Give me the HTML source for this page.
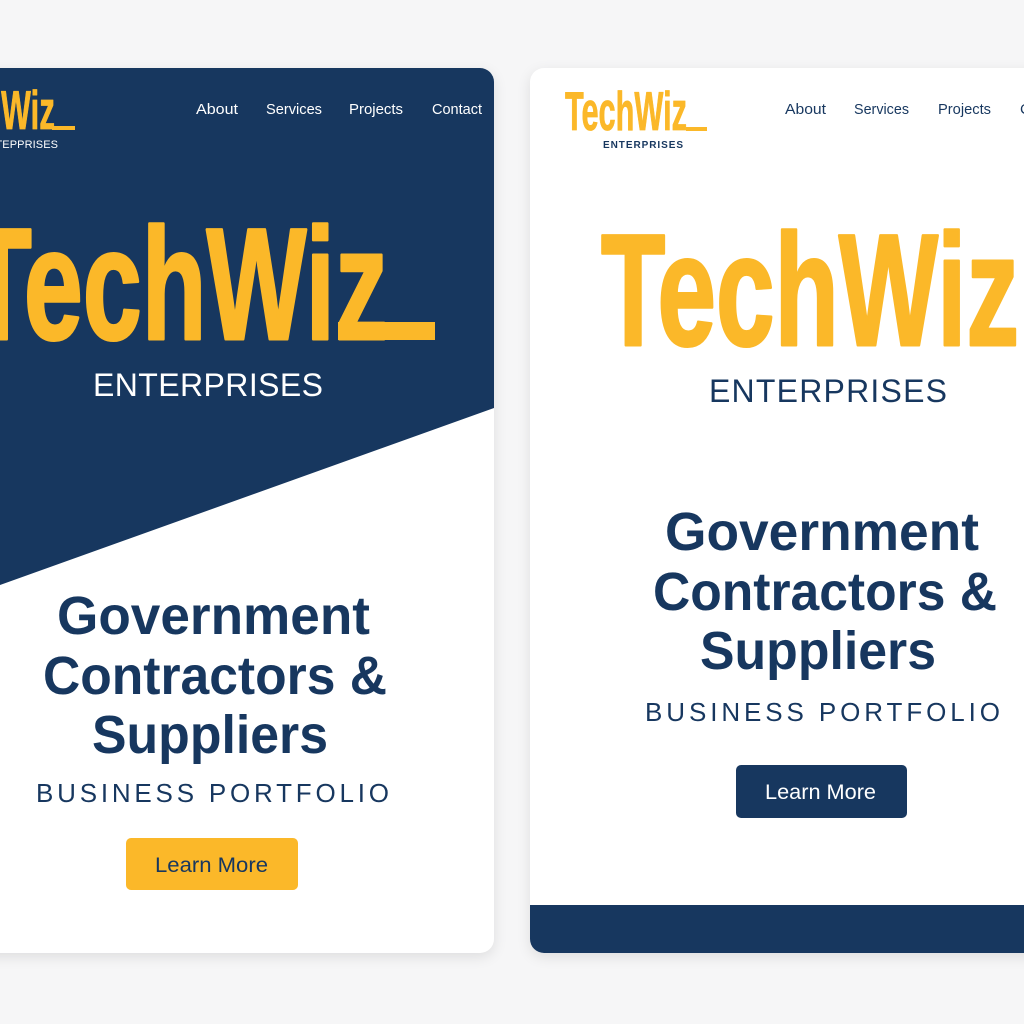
<!DOCTYPE html>
<html><head><meta charset="utf-8"><style>
html,body{margin:0;padding:0;width:1024px;height:1024px;background:#f6f6f7;overflow:hidden}
.card{position:absolute;top:68px;height:885px;border-radius:14px;background:#fff;box-shadow:0 4px 14px rgba(0,0,0,.10)}
svg{position:absolute;left:0;top:0}
</style></head><body>
<div class="card" style="left:-30px;width:524px"></div>
<div class="card" style="left:530px;width:520px"></div>
<svg width="1024" height="1024" viewBox="0 0 1024 1024">
<defs>
<clipPath id="lc"><rect x="-30" y="68" width="524" height="885" rx="14"/></clipPath>
<clipPath id="rc"><rect x="530" y="68" width="520" height="885" rx="14"/></clipPath>
</defs>
<g clip-path="url(#lc)">
<polygon points="-30,68 494,68 494,408 0,585 -30,596" fill="#17375f"/>
</g>
<g clip-path="url(#rc)">
<rect x="530" y="905" width="520" height="60" fill="#17375f"/>
</g>
<g font-family="Liberation Sans, sans-serif" font-weight="bold" fill="#fbb829" stroke="#fbb829" stroke-linejoin="round">
<text x="-70" y="129" font-size="55" stroke-width="0.8" textLength="125" lengthAdjust="spacingAndGlyphs">TechWiz</text>
<rect x="52" y="126" width="23" height="4" stroke="none"/>
<text x="565" y="130" font-size="55" stroke-width="0.8" textLength="122" lengthAdjust="spacingAndGlyphs">TechWiz</text>
<rect x="686" y="127" width="21" height="4" stroke="none"/>
<text x="-33" y="339" font-size="159" stroke-width="3" textLength="421" lengthAdjust="spacingAndGlyphs">TechWiz</text>
<rect x="338" y="322" width="97" height="18" stroke="none"/>
<text x="601" y="345" font-size="159" stroke-width="3" textLength="418" lengthAdjust="spacingAndGlyphs">TechWiz</text>
</g>
<g font-family="Liberation Sans, sans-serif" font-size="15">
<g fill="#fff">
<text x="196" y="114" textLength="42" lengthAdjust="spacingAndGlyphs">About</text>
<text x="266" y="114" textLength="56" lengthAdjust="spacingAndGlyphs">Services</text>
<text x="349" y="114" textLength="54" lengthAdjust="spacingAndGlyphs">Projects</text>
<text x="432" y="114" textLength="50" lengthAdjust="spacingAndGlyphs">Contact</text>
<text x="-20" y="148" font-size="11" textLength="78" lengthAdjust="spacing">ENTEPPRISES</text>
<text x="93" y="396" font-size="32" textLength="230" lengthAdjust="spacing">ENTERPRISES</text>
</g>
<g fill="#17375f">
<text x="785" y="114" textLength="41" lengthAdjust="spacingAndGlyphs">About</text>
<text x="854" y="114" textLength="55" lengthAdjust="spacingAndGlyphs">Services</text>
<text x="938" y="114" textLength="53" lengthAdjust="spacingAndGlyphs">Projects</text>
<text x="1020" y="114">Contact</text>
<text x="603" y="148" font-size="10" font-weight="bold" textLength="80" lengthAdjust="spacing">ENTERPRISES</text>
<text x="709" y="402" font-size="32" textLength="238" lengthAdjust="spacing">ENTERPRISES</text>
<g font-weight="bold" font-size="54">
<text x="57" y="634" textLength="313" lengthAdjust="spacingAndGlyphs">Government</text>
<text x="43" y="694" textLength="344" lengthAdjust="spacingAndGlyphs">Contractors &amp;</text>
<text x="92" y="753" textLength="236" lengthAdjust="spacingAndGlyphs">Suppliers</text>
<text x="665" y="550" textLength="314" lengthAdjust="spacingAndGlyphs">Government</text>
<text x="653" y="610" textLength="344" lengthAdjust="spacingAndGlyphs">Contractors &amp;</text>
<text x="700" y="669" textLength="236" lengthAdjust="spacingAndGlyphs">Suppliers</text>
</g>
<text x="36" y="802" font-size="26" textLength="353" lengthAdjust="spacing">BUSINESS PORTFOLIO</text>
<text x="645" y="721" font-size="26" textLength="355" lengthAdjust="spacing">BUSINESS PORTFOLIO</text>
</g>
<rect x="126" y="838" width="172" height="52" rx="5" fill="#fbb829"/>
<text x="155" y="872" font-size="21" fill="#17375f" textLength="113" lengthAdjust="spacingAndGlyphs">Learn More</text>
<rect x="736" y="765" width="171" height="53" rx="5" fill="#17375f"/>
<text x="765" y="799" font-size="21" fill="#fff" textLength="111" lengthAdjust="spacingAndGlyphs">Learn More</text>
</g>
</svg>
</body></html>
